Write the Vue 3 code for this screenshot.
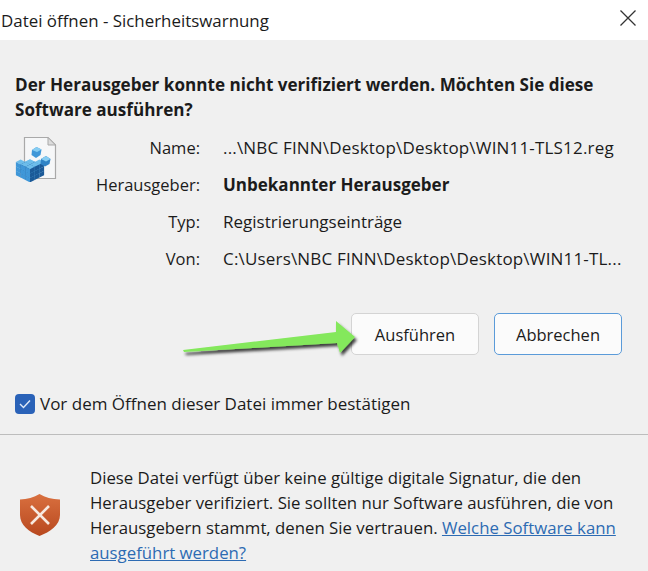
<script setup>
const rows = [
  { label: 'Name:', value: '...\\NBC FINN\\Desktop\\Desktop\\WIN11-TLS12.reg', path: true },
  { label: 'Herausgeber:', value: 'Unbekannter Herausgeber', bold: true },
  { label: 'Typ:', value: 'Registrierungseinträge' },
  { label: 'Von:', value: 'C:\\Users\\NBC FINN\\Desktop\\Desktop\\WIN11-TL...', path: true }
]
const w = 4.7
const h = 2.4
const s = 4.4
const missing = new Set(['0,0,2', '1,0,2', '0,1,2'])
const cubes = []
for (let k = 0; k < 3; k++) {
  for (let i = 0; i < 3; i++) {
    for (let j = 0; j < 3; j++) {
      if (missing.has(`${i},${j},${k}`)) continue
      cubes.push({ x: 24.3 + (j - i) * w, y: 166 + (i + j) * h - k * s })
    }
  }
}
</script>

<template>
  <div class="dialog">
    <header class="titlebar">
      <span class="title">Datei öffnen - Sicherheitswarnung</span>
      <svg class="close" width="16" height="16" viewBox="0 0 16 16">
        <path d="M0.5 0.5 L15.5 15.5 M15.5 0.5 L0.5 15.5" stroke="#333" stroke-width="1.3" fill="none" />
      </svg>
    </header>

    <main class="content">
      <h1 class="heading">Der Herausgeber konnte nicht verifiziert werden. Möchten Sie diese Software ausführen?</h1>

      <div class="details">
        <svg class="file-icon" width="42" height="46" viewBox="14 136 42 46">
          <path d="M23.500 137.500 H47 L54.500 145 V178.500 H23.500 Z" fill="#f6f7f8" stroke="#a9a9a9" stroke-width="1.200" />
          <path d="M47 137.500 V145 H54.500 Z" fill="#dcdcdc" stroke="#a9a9a9" stroke-width="1" />
          <g v-for="(c, i) in cubes" :key="i">
            <path :d="`M${c.x} ${c.y} l${w} ${-h} l${w} ${h} l${-w} ${h} z`" fill="#6dbdea" />
            <path :d="`M${c.x} ${c.y} l${w} ${h} v${s} l${-w} ${-h} z`" fill="#3f97d8" />
            <path :d="`M${c.x + w} ${c.y + h} l${w} ${-h} v${s} l${-w} ${h} z`" fill="#1b5a98" />
          </g>
          <path d="M31 150 l4.500 -3 l5 2.500 l-1 5.500 l-4.500 3 l-4.500 -3 z" fill="#3f97d8" />
          <path d="M31 150 l4.500 -3 l5 2.500 l-4.500 2.500 z" fill="#86cdf2" />
          <path d="M40 159 l5 -3 l4.500 3 l-1 5 l-4.500 2.500 l-4.500 -2.500 z" fill="#2f83c6" />
          <path d="M40 159 l5 -3 l4.500 3 l-4.500 2.500 z" fill="#86cdf2" />
        </svg>
        <dl class="rows">
          <div v-for="row in rows" :key="row.label" class="row">
            <dt class="label">{{ row.label }}</dt>
            <dd class="value" :class="{ strong: row.bold, path: row.path }">{{ row.value }}</dd>
          </div>
        </dl>
      </div>

      <div class="actions">
        <button class="btn">Ausführen</button>
        <button class="btn primary">Abbrechen</button>
      </div>

      <label class="check">
        <span class="box">
          <svg width="12" height="10" viewBox="0 0 12 10">
            <path d="M1 5 L4.500 8.500 L11 1.500" stroke="#dfe9f7" stroke-width="1.400" fill="none" />
          </svg>
        </span>
        <span>Vor dem Öffnen dieser Datei immer bestätigen</span>
      </label>
    </main>

    <footer class="footer">
      <svg class="shield" width="42" height="44" viewBox="0 0 42 44">
        <defs>
          <linearGradient id="sh" x1="0" y1="0" x2="0" y2="1">
            <stop offset="0" stop-color="#d9703f" />
            <stop offset="1" stop-color="#b8481f" />
          </linearGradient>
        </defs>
        <path d="M20.500 1 C15 4.500 8 6 1 6.500 V22 C1 32 10 39 20.500 43 C31 39 41 32 41 22 V6.500 C33 6 26 4.500 20.500 1 Z" fill="url(#sh)" />
        <path d="M12 13 L30 31 M30 13 L12 31" stroke="#f7e9e0" stroke-width="2.600" fill="none" />
      </svg>
      <p class="note">Diese Datei verfügt über keine gültige digitale Signatur, die den Herausgeber verifiziert. Sie sollten nur Software ausführen, die von Herausgebern stammt, denen Sie vertrauen. <a class="link">Welche Software kann ausgeführt werden?</a></p>
    </footer>

    <svg class="arrow" width="200" height="50" viewBox="175 312 200 50">
      <defs>
        <filter id="sd" x="-10%" y="-30%" width="120%" height="170%">
          <feDropShadow dx="2" dy="3" stdDeviation="1.800" flood-color="#000" flood-opacity="0.75" />
        </filter>
      </defs>
      <path d="M183 350 L336 332 L336 321 L355 337 L340 353 L337 343 L184 352 Z" fill="#84e85c" filter="url(#sd)" />
    </svg>
  </div>
</template>

<style scoped>
.dialog {
  position: relative;
  width: 648px;
  height: 571px;
  overflow: hidden;
  background: #f0f0f0;
  color: #1b1b1b;
  font-family: "Open Sans", "Noto Sans", sans-serif;
  font-size: 17px;
}
.titlebar {
  height: 40px;
  background: #fff;
  display: flex;
  align-items: center;
  justify-content: space-between;
  padding: 0 12px 0 1px;
}
.title {
  font-size: 16.9px;
}
.close {
  margin-top: -5px;
}
.content {
  height: 395px;
  box-sizing: border-box;
  padding: 32px 15px 0;
  border-bottom: 1px solid #bdbdbd;
}
.heading {
  margin: 0;
  font-size: 17.1px;
  font-weight: 700;
  line-height: 25px;
  width: 610px;
}
.details {
  display: flex;
  margin-top: 13px;
}
.file-icon {
  margin-top: 1px;
}
.rows {
  margin: 0;
  display: flex;
  flex-direction: column;
  gap: 12px;
}
.row {
  display: flex;
  height: 25px;
  line-height: 25px;
}
.label {
  width: 143px;
  text-align: right;
  font-size: 16.5px;
}
.value {
  margin: 0 0 0 23px;
  white-space: nowrap;
}
.path {
  letter-spacing: 0.18px;
}
.strong {
  font-weight: 700;
}
.actions {
  display: flex;
  justify-content: flex-end;
  gap: 15px;
  margin-top: 42px;
  padding-right: 11px;
}
.btn {
  width: 128px;
  height: 42px;
  box-sizing: border-box;
  border: 1.5px solid #d4d4d4;
  border-radius: 5px;
  background: #fbfbfb;
  color: #1b1b1b;
  font-family: inherit;
  font-size: 16.5px;
  padding: 0;
}
.primary {
  border-color: #5b9bd9;
}
.check {
  display: flex;
  align-items: center;
  gap: 5px;
  margin-top: 37px;
}
.box {
  width: 20px;
  height: 20px;
  border-radius: 4px;
  background: #2a62b8;
  display: flex;
  align-items: center;
  justify-content: center;
}
.footer {
  display: flex;
  padding: 30px 15px 0 19px;
}
.shield {
  margin-top: 28px;
  flex: none;
}
.note {
  margin: 0 0 0 29px;
  line-height: 25px;
  width: 540px;
  font-size: 16.8px;
}
.link {
  color: #2d6bb3;
  text-decoration: underline;
}
.arrow {
  position: absolute;
  left: 175px;
  top: 312px;
}
</style>
